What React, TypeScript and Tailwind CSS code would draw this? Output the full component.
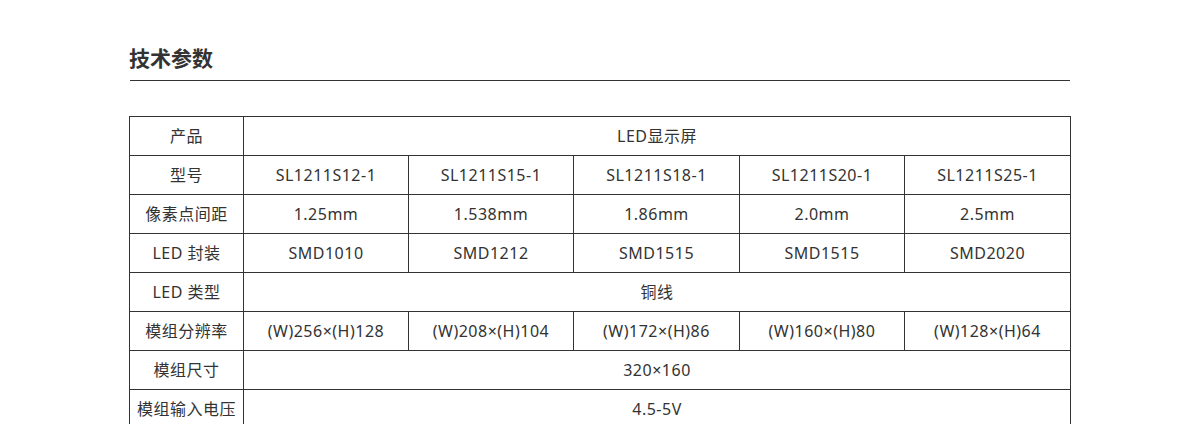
import React from 'react';

const font = { fontFamily: '"Noto Sans", "Noto Sans CJK SC", sans-serif' };

const models = ['SL1211S12-1', 'SL1211S15-1', 'SL1211S18-1', 'SL1211S20-1', 'SL1211S25-1'];

type Row = { label: string; values: string[] };

const rows: Row[] = [
  { label: '产品', values: ['LED显示屏'] },
  { label: '型号', values: models },
  { label: '像素点间距', values: ['1.25mm', '1.538mm', '1.86mm', '2.0mm', '2.5mm'] },
  { label: 'LED 封装', values: ['SMD1010', 'SMD1212', 'SMD1515', 'SMD1515', 'SMD2020'] },
  { label: 'LED 类型', values: ['铜线'] },
  {
    label: '模组分辨率',
    values: ['(W)256×(H)128', '(W)208×(H)104', '(W)172×(H)86', '(W)160×(H)80', '(W)128×(H)64'],
  },
  { label: '模组尺寸', values: ['320×160'] },
  { label: '模组输入电压', values: ['4.5-5V'] },
];

export default function App() {
  return (
    <div className="w-[1200px] h-[424px] bg-white overflow-hidden" style={font}>
      <div className="ml-[129px] w-[941px] pt-[42px]">
        <h2 className="text-[21px] leading-[32px] font-bold text-[#333]">技术参数</h2>
        <div className="mt-[6px] ml-px h-px bg-[#333]" />
        <table className="mt-[35px] w-[941px] border-collapse table-fixed text-[16px] tracking-[0.5px] text-[#333]">
          <colgroup>
            <col className="w-[114px]" />
            <col className="w-[165px]" />
            <col className="w-[165px]" />
            <col className="w-[166px]" />
            <col className="w-[165px]" />
            <col className="w-[166px]" />
          </colgroup>
          <tbody>
            {rows.map((row) => (
              <tr key={row.label} className="h-[39px]">
                <td className="border border-[#333] text-center p-0">{row.label}</td>
                {row.values.length === 1 ? (
                  <td colSpan={5} className="border border-[#333] text-center p-0">
                    {row.values[0]}
                  </td>
                ) : (
                  row.values.map((v, i) => (
                    <td key={i} className="border border-[#333] text-center p-0">
                      {v}
                    </td>
                  ))
                )}
              </tr>
            ))}
          </tbody>
        </table>
      </div>
    </div>
  );
}
